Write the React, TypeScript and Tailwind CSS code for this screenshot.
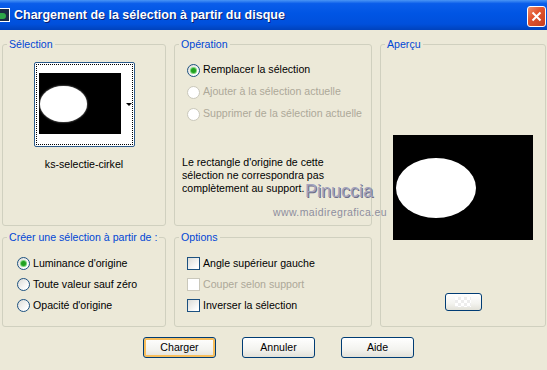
import React from "react";

interface GroupProps {
  label: string;
  className?: string;
  children?: React.ReactNode;
}

const Group: React.FC<GroupProps> = ({ label, className, children }) => {
  return (
    <fieldset
      className={`border border-[#D0D0BF] rounded-[3px] min-w-0 ${className || ""}`}
    >
      <legend className="ml-[4px] px-[2px] text-[#0046D5] leading-[13px] whitespace-nowrap">
        {label}
      </legend>
      {children}
    </fieldset>
  );
};

const Radio: React.FC<{ checked?: boolean; disabled?: boolean; label: string }> = ({
  checked,
  disabled,
  label,
}) => {
  return (
    <div className="flex items-center h-[22px]">
      <span
        className={`flex items-center justify-center w-[13px] h-[13px] rounded-full border ${
          disabled
            ? "border-[#CAC8BB] bg-white"
            : "border-[#1C5180] bg-[linear-gradient(135deg,#DCDCD7,#FFFFFF_80%)]"
        }`}
      >
        {checked && (
          <span className="w-[5px] h-[5px] rounded-full bg-[#21A121] shadow-[0_0_0_1px_#7AD57A]" />
        )}
      </span>
      <span className={`ml-[3px] whitespace-nowrap ${disabled ? "text-[#ACA899]" : "text-black"}`}>
        {label}
      </span>
    </div>
  );
};

const Check: React.FC<{ disabled?: boolean; label: string }> = ({ disabled, label }) => {
  return (
    <div className="flex items-center h-[21px]">
      <span
        className={`w-[13px] h-[13px] border ${
          disabled
            ? "border-[#CAC8BB] bg-white"
            : "border-[#1C5180] bg-[linear-gradient(135deg,#DCDCD7,#FFFFFF_85%)]"
        }`}
      />
      <span className={`ml-[3px] whitespace-nowrap ${disabled ? "text-[#ACA899]" : "text-black"}`}>
        {label}
      </span>
    </div>
  );
};

const Button: React.FC<{ label: string; focused?: boolean }> = ({ label, focused }) => {
  return (
    <button
      className={`w-[73px] h-[21px] rounded-[3px] border border-[#003C74] bg-[linear-gradient(to_bottom,#FFFFFF,#F3F3EF_60%,#E2E1D8)] text-black leading-none ${
        focused ? "shadow-[inset_0_0_0_2px_#F7BE5C]" : ""
      }`}
    >
      {label}
    </button>
  );
};

export default function App() {
  return (
    <div className="relative w-[547px] h-[370px] overflow-hidden bg-[#ECE9D8] font-['Liberation_Sans',Arial,sans-serif] text-[10.6px] text-black">
      {/* title bar */}
      <div className="flex items-center h-[30px] bg-[linear-gradient(to_bottom,#4A95F5,#0A5DEA_12%,#0055E4_45%,#0050DC_80%,#0042BC)]">
        <div className="ml-[-6px] w-[16px] h-[14px] border border-white bg-[#1D2D44] flex items-end justify-center">
          <span className="w-[8px] h-[6px] rounded-full bg-[#2EA84A] mb-[2px]" />
        </div>
        <span className="ml-[4px] text-white font-bold text-[12.5px] [text-shadow:1px_1px_0_#0A1E6E]">
          Chargement de la sélection à partir du disque
        </span>
        <div className="ml-auto mr-[1px] mt-[3px] w-[19px] h-[21px] rounded-[3px] border border-white bg-[linear-gradient(135deg,#F0906C,#E2552F_40%,#C53E1E)] flex items-center justify-center">
          <svg width="11" height="11" viewBox="0 0 11 11">
            <path d="M1.5 1.5 L9.5 9.5 M9.5 1.5 L1.5 9.5" stroke="white" strokeWidth="2" />
          </svg>
        </div>
      </div>

      {/* groups */}
      <div className="grid grid-cols-[164px_198px_166px] grid-rows-[188px_96px] gap-x-[8px] gap-y-[5px] pl-[2px] pt-[8px]">
        <Group label="Sélection">
          <div className="flex flex-col items-center pt-[11px]">
            <div className="relative w-[101px] h-[85px] rounded-[2px] border border-[#2C5A8A] bg-white p-[1px]">
              <div className="w-full h-full border border-dotted border-black pl-[2px] pt-[8px]">
                <div className="relative w-[82px] h-[61px] bg-black">
                  <div className="absolute left-[1px] top-[13px] w-[47px] h-[36px] rounded-[50%] bg-white shadow-[0_0_2px_#bbb]" />
                </div>
              </div>
              <svg
                className="absolute right-[2px] top-[40px]"
                width="6"
                height="4"
                viewBox="0 0 6 4"
              >
                <path d="M0 0 H6 L3 3 Z" fill="black" />
              </svg>
            </div>
            <div className="mt-[11px] leading-[13px]">ks-selectie-cirkel</div>
          </div>
        </Group>

        <Group label="Opération">
          <div className="pl-[12px] pt-[8px] flex flex-col">
            <Radio checked label="Remplacer la sélection" />
            <Radio disabled label="Ajouter à la sélection actuelle" />
            <Radio disabled label="Supprimer de la sélection actuelle" />
          </div>
          <div className="pl-[7px] mt-[31px] leading-[13px]">
            Le rectangle d'origine de cette
            <br />
            sélection ne correspondra pas
            <br />
            complètement au support.
          </div>
        </Group>

        <Group label="Aperçu" className="row-span-2">
          <div className="flex flex-col items-center pt-[84px]">
            <div className="relative w-[140px] h-[105px] bg-black">
              <div className="absolute left-[3px] top-[23px] w-[80px] h-[60px] rounded-[50%] bg-white" />
            </div>
            <div className="mt-[53px] w-[37px] h-[18px] rounded-[3px] border border-[#003C74] bg-[linear-gradient(to_bottom,#FFFFFF,#F3F3EF_60%,#E2E1D8)] flex items-center justify-center">
              <div className="w-[16px] h-[10px] bg-[conic-gradient(#EDEDED_25%,#FFFFFF_0_50%,#EDEDED_0_75%,#FFFFFF_0)] bg-[length:6px_6px]" />
            </div>
          </div>
        </Group>

        <Group label="Créer une sélection à partir de :">
          <div className="pl-[14px] pt-[9px] flex flex-col [&>div]:h-[21px]">
            <Radio checked label="Luminance d'origine" />
            <Radio label="Toute valeur sauf zéro" />
            <Radio label="Opacité d'origine" />
          </div>
        </Group>

        <Group label="Options">
          <div className="pl-[12px] pt-[9px] flex flex-col">
            <Check label="Angle supérieur gauche" />
            <Check disabled label="Couper selon support" />
            <Check label="Inverser la sélection" />
          </div>
        </Group>
      </div>

      {/* buttons */}
      <div className="flex gap-[26px] pl-[143px] mt-[10px]">
        <Button focused label="Charger" />
        <Button label="Annuler" />
        <Button label="Aide" />
      </div>

      {/* watermark */}
      <div className="absolute left-[305px] top-[182px] text-[18px] leading-none text-[#A3A3BD] [text-shadow:1px_1px_0_#6E6E88]">
        Pinuccia
      </div>
      <div className="absolute left-[273px] top-[207px] text-[10.5px] leading-none tracking-[0.4px] text-[#8E8E9E]">
        www.maidiregrafica.eu
      </div>
    </div>
  );
}
